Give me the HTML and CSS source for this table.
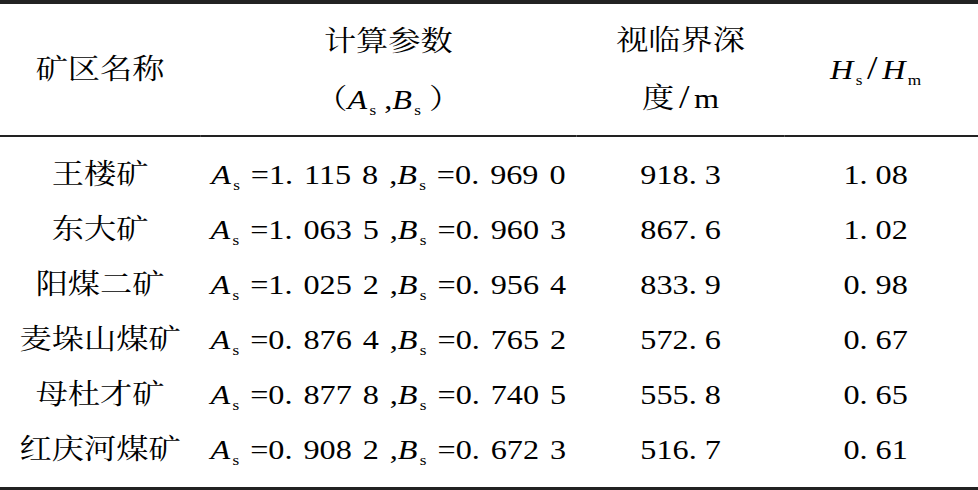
FILE: index.html
```html
<!DOCTYPE html>
<html lang="zh">
<head>
    <meta charset="UTF-8">
    <title>矿区视临界深度</title>
    <link rel="stylesheet" href="styles.css">
</head>
<body>
    <table class="tabel">
        <thead>
            <tr>
                <th class="navn">矿区名称</th>
                <th class="param">计算参数<br>（<i>A</i><sub>s</sub> ,<i>B</i><sub>s</sub> ）</th>
                <th class="dybde">视临界深<br>度<span class="skraa">/</span>m</th>
                <th class="forhold"><i>H</i><sub>s</sub><span class="skraa">/</span><i>H</i><sub>m</sub></th>
            </tr>
        </thead>
        <tbody>
            <tr class="forste">
                <td class="navn">王楼矿</td>
                <td class="param"><i>A</i><sub>s</sub> =1. 115 8 ,<i>B</i><sub>s</sub> =0. 969 0</td>
                <td class="dybde">918. 3</td>
                <td class="forhold">1. 08</td>
            </tr>
            <tr>
                <td class="navn">东大矿</td>
                <td class="param"><i>A</i><sub>s</sub> =1. 063 5 ,<i>B</i><sub>s</sub> =0. 960 3</td>
                <td class="dybde">867. 6</td>
                <td class="forhold">1. 02</td>
            </tr>
            <tr>
                <td class="navn">阳煤二矿</td>
                <td class="param"><i>A</i><sub>s</sub> =1. 025 2 ,<i>B</i><sub>s</sub> =0. 956 4</td>
                <td class="dybde">833. 9</td>
                <td class="forhold">0. 98</td>
            </tr>
            <tr>
                <td class="navn">麦垛山煤矿</td>
                <td class="param"><i>A</i><sub>s</sub> =0. 876 4 ,<i>B</i><sub>s</sub> =0. 765 2</td>
                <td class="dybde">572. 6</td>
                <td class="forhold">0. 67</td>
            </tr>
            <tr>
                <td class="navn">母杜才矿</td>
                <td class="param"><i>A</i><sub>s</sub> =0. 877 8 ,<i>B</i><sub>s</sub> =0. 740 5</td>
                <td class="dybde">555. 8</td>
                <td class="forhold">0. 65</td>
            </tr>
            <tr class="sidste">
                <td class="navn">红庆河煤矿</td>
                <td class="param"><i>A</i><sub>s</sub> =0. 908 2 ,<i>B</i><sub>s</sub> =0. 672 3</td>
                <td class="dybde">516. 7</td>
                <td class="forhold">0. 61</td>
            </tr>
        </tbody>
    </table>
</body>
</html>
```

FILE: styles.css
```css
body {
    margin: 0;
    background: #fff;
}

/* the printed table is set a little wide, so stretch it sideways */
.tabel {
    width: 850px;
    transform: scaleX(1.1506);
    transform-origin: 0 0;
    border-collapse: separate;
    border-spacing: 0;
    font-family: "Liberation Serif", "Noto Serif CJK SC", "Noto Sans CJK SC", serif;
    font-size: 28px;
    color: #000;
    border-top: 4px solid #222;
    border-bottom: 5px solid #222;
}

.tabel th {
    font-weight: normal;
    height: 129px;
    line-height: 58px;
    padding: 0;
    border-bottom: 2px solid #222;
}
.tabel th.param {
    padding-top: 2px;
}

.tabel td {
    height: 55px;
    padding: 0;
    line-height: 55px;
    white-space: nowrap;
}

.tabel .forste td {
    padding-top: 10px;
}
.tabel .sidste td {
    padding-bottom: 10px;
}

.navn {
    width: 174px;
    text-align: center;
}
.param {
    width: 327px;
    text-align: center;
}
td.param {
    word-spacing: 2.5px;
}
.dybde {
    width: 181px;
    text-align: center;
}
.forhold {
    text-align: center;
    padding-right: 10px !important;
}

.skraa {
    font-size: 33px;
    line-height: 0;
    margin: 0 4px;
}

i {
    font-style: italic;
}
sub {
    font-size: 15px;
    vertical-align: -6px;
    line-height: 0;
    margin-left: 2px;
    word-spacing: 0;
}
```
